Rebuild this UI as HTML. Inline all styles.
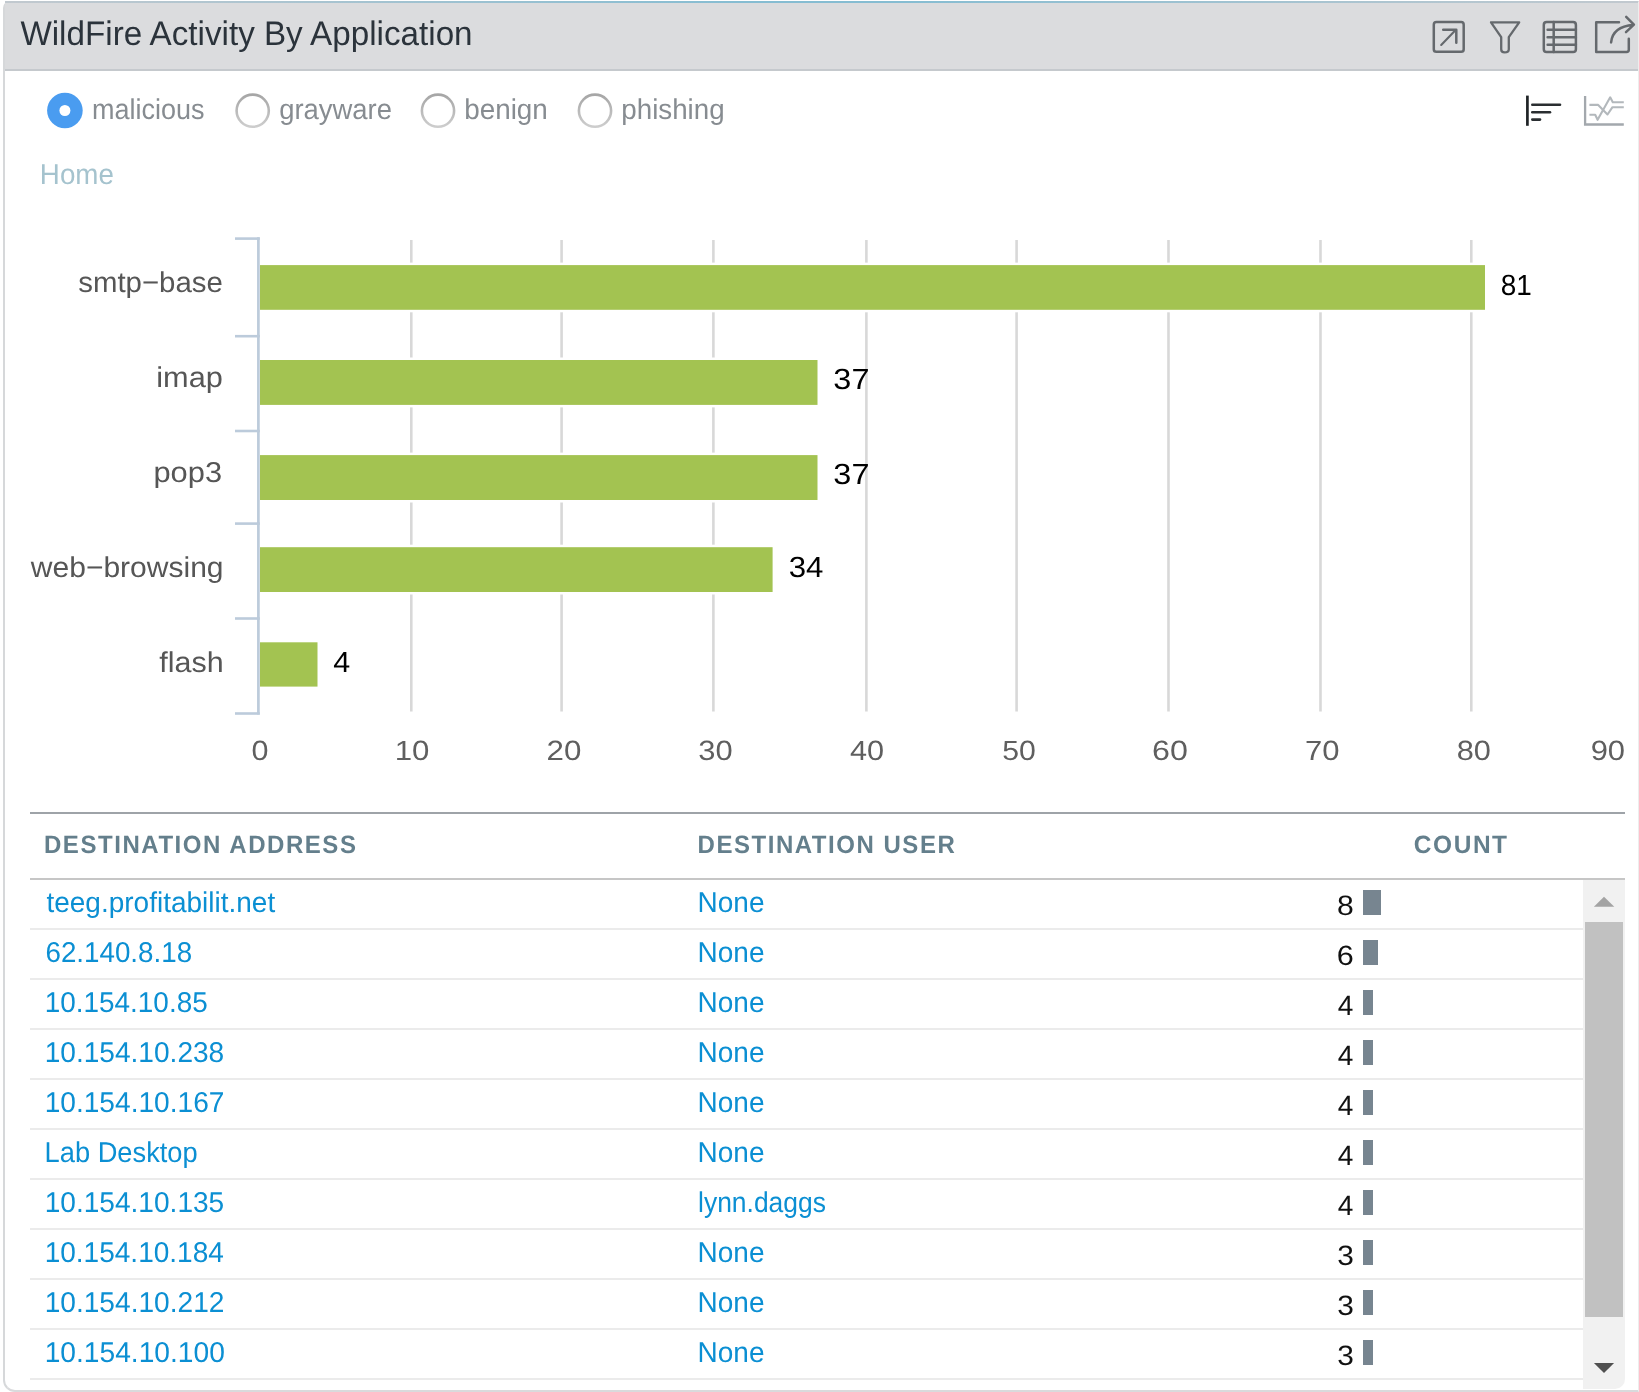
<!DOCTYPE html>
<html><head><meta charset="utf-8"><title>WildFire Activity By Application</title>
<style>
html,body{margin:0;padding:0;width:1639px;height:1392px;overflow:hidden;background:#ffffff;}
*{box-sizing:border-box;}
body{position:relative;font-family:"Liberation Sans",sans-serif;}
.abs{position:absolute;}
svg text{font-family:"Liberation Sans",sans-serif;text-rendering:geometricPrecision;}
svg.abs{will-change:transform;}
</style></head><body>

<div class="abs" style="left:3px;top:1px;width:1636px;height:1391px;border:2px solid #d6d8da;border-right:1px solid #ededed;border-bottom:2px solid #d9dadc;border-radius:7px 0 0 12px;background:#fff"></div>
<div class="abs" style="left:5px;top:1px;width:1633px;height:2px;background:linear-gradient(90deg,#c2c9cf 0%,#86bdd2 45%,#86bdd2 55%,#c2c9cf 100%)"></div>
<div class="abs" style="left:5px;top:3px;width:1633px;height:66px;background:#dbdcde"></div>
<div class="abs" style="left:5px;top:69px;width:1633px;height:2px;background:#c5c9cd"></div>
<div class="abs" style="left:30px;top:812px;width:1595px;height:2px;background:#9ea3a8"></div>
<div class="abs" style="left:30px;top:878px;width:1595px;height:2px;background:#c6c6c6"></div>
<div class="abs" style="left:1363px;top:890px;width:18px;height:25px;background:#778590"></div>
<div class="abs" style="left:30px;top:928px;width:1553px;height:2px;background:#ebebeb"></div>
<div class="abs" style="left:1363px;top:940px;width:15px;height:25px;background:#778590"></div>
<div class="abs" style="left:30px;top:978px;width:1553px;height:2px;background:#ebebeb"></div>
<div class="abs" style="left:1363px;top:990px;width:10px;height:25px;background:#778590"></div>
<div class="abs" style="left:30px;top:1028px;width:1553px;height:2px;background:#ebebeb"></div>
<div class="abs" style="left:1363px;top:1040px;width:10px;height:25px;background:#778590"></div>
<div class="abs" style="left:30px;top:1078px;width:1553px;height:2px;background:#ebebeb"></div>
<div class="abs" style="left:1363px;top:1090px;width:10px;height:25px;background:#778590"></div>
<div class="abs" style="left:30px;top:1128px;width:1553px;height:2px;background:#ebebeb"></div>
<div class="abs" style="left:1363px;top:1140px;width:10px;height:25px;background:#778590"></div>
<div class="abs" style="left:30px;top:1178px;width:1553px;height:2px;background:#ebebeb"></div>
<div class="abs" style="left:1363px;top:1190px;width:10px;height:25px;background:#778590"></div>
<div class="abs" style="left:30px;top:1228px;width:1553px;height:2px;background:#ebebeb"></div>
<div class="abs" style="left:1363px;top:1240px;width:10px;height:25px;background:#778590"></div>
<div class="abs" style="left:30px;top:1278px;width:1553px;height:2px;background:#ebebeb"></div>
<div class="abs" style="left:1363px;top:1290px;width:10px;height:25px;background:#778590"></div>
<div class="abs" style="left:30px;top:1328px;width:1553px;height:2px;background:#ebebeb"></div>
<div class="abs" style="left:1363px;top:1340px;width:10px;height:25px;background:#778590"></div>
<div class="abs" style="left:30px;top:1378px;width:1553px;height:2px;background:#ebebeb"></div>
<div class="abs" style="left:1583px;top:880px;width:42px;height:509px;background:#f1f1f1;border-radius:0 0 10px 0"></div>
<div class="abs" style="left:1585px;top:922px;width:38px;height:395px;background:#c1c1c1"></div>
<svg class="abs" style="left:0;top:0" width="1639" height="1392" viewBox="0 0 1639 1392">
<text transform="translate(20.40,44.80) scale(0.9768,1)" font-size="34.00" font-weight="normal" fill="#2b333b">WildFire Activity By Application</text>
<text transform="translate(91.91,119.00) scale(0.9441,1)" font-size="28.60" font-weight="normal" fill="#878c91">malicious</text>
<text transform="translate(279.15,119.00) scale(0.9592,1)" font-size="28.60" font-weight="normal" fill="#878c91">grayware</text>
<text transform="translate(464.15,119.00) scale(0.9745,1)" font-size="28.60" font-weight="normal" fill="#878c91">benign</text>
<text transform="translate(621.25,119.00) scale(0.9708,1)" font-size="28.60" font-weight="normal" fill="#878c91">phishing</text>
<circle cx="64.9" cy="110.5" r="17.8" fill="#4a9cf0"/>
<circle cx="64.9" cy="110.5" r="5.5" fill="#ffffff"/>
<defs><linearGradient id="rg" x1="0" y1="0" x2="0" y2="1"><stop offset="0" stop-color="#a6a6a6"/><stop offset="1" stop-color="#cdcdcd"/></linearGradient></defs>
<circle cx="252.7" cy="110.7" r="16.1" fill="#fff" stroke="url(#rg)" stroke-width="2.6"/>
<circle cx="438.0" cy="110.7" r="16.1" fill="#fff" stroke="url(#rg)" stroke-width="2.6"/>
<circle cx="595.0" cy="110.7" r="16.1" fill="#fff" stroke="url(#rg)" stroke-width="2.6"/>
<text transform="translate(39.87,183.90) scale(0.9711,1)" font-size="28.60" font-weight="normal" fill="#a5c3ce">Home</text>
<line x1="411.3" y1="240" x2="411.3" y2="711.5" stroke="#d8d8d8" stroke-width="2.6"/>
<line x1="561.6" y1="240" x2="561.6" y2="711.5" stroke="#d8d8d8" stroke-width="2.6"/>
<line x1="713.4" y1="240" x2="713.4" y2="711.5" stroke="#d8d8d8" stroke-width="2.6"/>
<line x1="866.4" y1="240" x2="866.4" y2="711.5" stroke="#d8d8d8" stroke-width="2.6"/>
<line x1="1016.6" y1="240" x2="1016.6" y2="711.5" stroke="#d8d8d8" stroke-width="2.6"/>
<line x1="1168.5" y1="240" x2="1168.5" y2="711.5" stroke="#d8d8d8" stroke-width="2.6"/>
<line x1="1320.5" y1="240" x2="1320.5" y2="711.5" stroke="#d8d8d8" stroke-width="2.6"/>
<line x1="1471.3" y1="240" x2="1471.3" y2="711.5" stroke="#d8d8d8" stroke-width="2.6"/>
<rect x="260" y="262.6" width="1227.5" height="49.69999999999999" fill="#ffffff"/>
<rect x="260" y="265.1" width="1225.0" height="44.69999999999999" fill="#a3c351"/>
<rect x="260" y="357.5" width="560.0" height="49.89999999999998" fill="#ffffff"/>
<rect x="260" y="360.0" width="557.5" height="44.89999999999998" fill="#a3c351"/>
<rect x="260" y="452.6" width="560.0" height="49.89999999999998" fill="#ffffff"/>
<rect x="260" y="455.1" width="557.5" height="44.89999999999998" fill="#a3c351"/>
<rect x="260" y="544.7" width="515.1" height="49.799999999999955" fill="#ffffff"/>
<rect x="260" y="547.2" width="512.6" height="44.799999999999955" fill="#a3c351"/>
<rect x="260" y="639.8" width="60.0" height="49.30000000000007" fill="#ffffff"/>
<rect x="260" y="642.3" width="57.5" height="44.30000000000007" fill="#a3c351"/>
<line x1="258.4" y1="237.3" x2="258.4" y2="714.5" stroke="#bccbdb" stroke-width="2.7"/>
<line x1="235" y1="238.6" x2="259.8" y2="238.6" stroke="#bccbdb" stroke-width="2.6"/>
<line x1="235" y1="336.2" x2="259.8" y2="336.2" stroke="#bccbdb" stroke-width="2.6"/>
<line x1="235" y1="431.0" x2="259.8" y2="431.0" stroke="#bccbdb" stroke-width="2.6"/>
<line x1="235" y1="523.6" x2="259.8" y2="523.6" stroke="#bccbdb" stroke-width="2.6"/>
<line x1="235" y1="618.5" x2="259.8" y2="618.5" stroke="#bccbdb" stroke-width="2.6"/>
<line x1="235" y1="713.5" x2="259.8" y2="713.5" stroke="#bccbdb" stroke-width="2.6"/>
<text transform="translate(78.28,292.20) scale(1.0244,1)" font-size="28.70" font-weight="normal" fill="#565656">smtp−base</text>
<text transform="translate(156.26,386.80) scale(1.0711,1)" font-size="28.70" font-weight="normal" fill="#565656">imap</text>
<text transform="translate(153.47,482.00) scale(1.0740,1)" font-size="28.70" font-weight="normal" fill="#565656">pop3</text>
<text transform="translate(30.80,577.30) scale(1.0466,1)" font-size="28.70" font-weight="normal" fill="#565656">web−browsing</text>
<text transform="translate(159.28,671.90) scale(1.0616,1)" font-size="28.70" font-weight="normal" fill="#565656">flash</text>
<text transform="translate(1500.65,295.00) scale(0.9596,1)" font-size="29.10" font-weight="normal" fill="#000000">81</text>
<text transform="translate(833.37,389.40) scale(1.1141,1)" font-size="29.10" font-weight="normal" fill="#000000">37</text>
<text transform="translate(833.37,484.40) scale(1.1141,1)" font-size="29.10" font-weight="normal" fill="#000000">37</text>
<text transform="translate(788.72,576.90) scale(1.0724,1)" font-size="29.10" font-weight="normal" fill="#000000">34</text>
<text transform="translate(333.17,671.80) scale(1.0479,1)" font-size="29.10" font-weight="normal" fill="#000000">4</text>
<text transform="translate(251.59,760.00) scale(1.0977,1)" font-size="27.80" font-weight="normal" fill="#5f5f5f">0</text>
<text transform="translate(394.64,760.00) scale(1.1223,1)" font-size="27.80" font-weight="normal" fill="#5f5f5f">10</text>
<text transform="translate(546.62,760.00) scale(1.1263,1)" font-size="27.80" font-weight="normal" fill="#5f5f5f">20</text>
<text transform="translate(698.28,760.00) scale(1.1111,1)" font-size="27.80" font-weight="normal" fill="#5f5f5f">30</text>
<text transform="translate(850.04,760.00) scale(1.1024,1)" font-size="27.80" font-weight="normal" fill="#5f5f5f">40</text>
<text transform="translate(1002.20,760.00) scale(1.0868,1)" font-size="27.80" font-weight="normal" fill="#5f5f5f">50</text>
<text transform="translate(1151.98,760.00) scale(1.1579,1)" font-size="27.80" font-weight="normal" fill="#5f5f5f">60</text>
<text transform="translate(1304.94,760.00) scale(1.1158,1)" font-size="27.80" font-weight="normal" fill="#5f5f5f">70</text>
<text transform="translate(1456.67,760.00) scale(1.1045,1)" font-size="27.80" font-weight="normal" fill="#5f5f5f">80</text>
<text transform="translate(1590.65,760.00) scale(1.1119,1)" font-size="27.80" font-weight="normal" fill="#5f5f5f">90</text>
<text transform="translate(43.97,852.80) scale(0.9609,1)" font-size="25.00" font-weight="bold" letter-spacing="1.6" fill="#647f8c">DESTINATION ADDRESS</text>
<text transform="translate(697.57,852.80) scale(0.9597,1)" font-size="25.00" font-weight="bold" letter-spacing="1.6" fill="#647f8c">DESTINATION USER</text>
<text transform="translate(1413.82,852.80) scale(0.9787,1)" font-size="25.00" font-weight="bold" letter-spacing="1.6" fill="#647f8c">COUNT</text>
<text transform="translate(46.41,912.00) scale(0.9790,1)" font-size="28.60" font-weight="normal" fill="#0b8fd3">teeg.profitabilit.net</text>
<text transform="translate(697.55,912.00) scale(0.9799,1)" font-size="28.60" font-weight="normal" fill="#0b8fd3">None</text>
<text transform="translate(1337.01,914.80) scale(1.0758,1)" font-size="28.00" font-weight="normal" fill="#111111">8</text>
<text transform="translate(45.44,962.00) scale(0.9710,1)" font-size="28.60" font-weight="normal" fill="#0b8fd3">62.140.8.18</text>
<text transform="translate(697.55,962.00) scale(0.9799,1)" font-size="28.60" font-weight="normal" fill="#0b8fd3">None</text>
<text transform="translate(1336.77,964.80) scale(1.0923,1)" font-size="28.00" font-weight="normal" fill="#111111">6</text>
<text transform="translate(44.65,1012.00) scale(0.9768,1)" font-size="28.60" font-weight="normal" fill="#0b8fd3">10.154.10.85</text>
<text transform="translate(697.55,1012.00) scale(0.9799,1)" font-size="28.60" font-weight="normal" fill="#0b8fd3">None</text>
<text transform="translate(1337.70,1014.80) scale(1.0000,1)" font-size="28.00" font-weight="normal" fill="#111111">4</text>
<text transform="translate(44.64,1062.00) scale(0.9822,1)" font-size="28.60" font-weight="normal" fill="#0b8fd3">10.154.10.238</text>
<text transform="translate(697.55,1062.00) scale(0.9799,1)" font-size="28.60" font-weight="normal" fill="#0b8fd3">None</text>
<text transform="translate(1337.70,1064.80) scale(1.0000,1)" font-size="28.00" font-weight="normal" fill="#111111">4</text>
<text transform="translate(44.64,1112.00) scale(0.9833,1)" font-size="28.60" font-weight="normal" fill="#0b8fd3">10.154.10.167</text>
<text transform="translate(697.55,1112.00) scale(0.9799,1)" font-size="28.60" font-weight="normal" fill="#0b8fd3">None</text>
<text transform="translate(1337.70,1114.80) scale(1.0000,1)" font-size="28.00" font-weight="normal" fill="#111111">4</text>
<text transform="translate(44.61,1162.00) scale(0.9535,1)" font-size="28.60" font-weight="normal" fill="#0b8fd3">Lab Desktop</text>
<text transform="translate(697.55,1162.00) scale(0.9799,1)" font-size="28.60" font-weight="normal" fill="#0b8fd3">None</text>
<text transform="translate(1337.70,1164.80) scale(1.0000,1)" font-size="28.00" font-weight="normal" fill="#111111">4</text>
<text transform="translate(44.64,1212.00) scale(0.9822,1)" font-size="28.60" font-weight="normal" fill="#0b8fd3">10.154.10.135</text>
<text transform="translate(698.04,1212.00) scale(0.9247,1)" font-size="28.60" font-weight="normal" fill="#0b8fd3">lynn.daggs</text>
<text transform="translate(1337.70,1214.80) scale(1.0000,1)" font-size="28.00" font-weight="normal" fill="#111111">4</text>
<text transform="translate(44.64,1262.00) scale(0.9800,1)" font-size="28.60" font-weight="normal" fill="#0b8fd3">10.154.10.184</text>
<text transform="translate(697.55,1262.00) scale(0.9799,1)" font-size="28.60" font-weight="normal" fill="#0b8fd3">None</text>
<text transform="translate(1337.13,1264.80) scale(1.0677,1)" font-size="28.00" font-weight="normal" fill="#111111">3</text>
<text transform="translate(44.64,1312.00) scale(0.9833,1)" font-size="28.60" font-weight="normal" fill="#0b8fd3">10.154.10.212</text>
<text transform="translate(697.55,1312.00) scale(0.9799,1)" font-size="28.60" font-weight="normal" fill="#0b8fd3">None</text>
<text transform="translate(1337.13,1314.80) scale(1.0677,1)" font-size="28.00" font-weight="normal" fill="#111111">3</text>
<text transform="translate(44.63,1362.00) scale(0.9855,1)" font-size="28.60" font-weight="normal" fill="#0b8fd3">10.154.10.100</text>
<text transform="translate(697.55,1362.00) scale(0.9799,1)" font-size="28.60" font-weight="normal" fill="#0b8fd3">None</text>
<text transform="translate(1337.13,1364.80) scale(1.0677,1)" font-size="28.00" font-weight="normal" fill="#111111">3</text>
<polygon points="1593.9,906.8 1614.3,906.8 1604,896.8" fill="#a3a3a3"/>
<polygon points="1593.9,1363 1614.1,1363 1604,1373" fill="#505050"/>
<g fill="none" stroke="#65696d" stroke-width="2.5" stroke-linecap="round" stroke-linejoin="round"><rect x="1433.8" y="22.1" width="29.9" height="29.7" rx="2.6"/><path d="M1441.2,44.9 L1454.2,31.6" stroke-width="2.1"/><path d="M1443.2,29.8 L1456.3,29.8 L1456.3,42.8"/><path d="M1491,22.3 L1519.2,22.3 L1508.8,37.2 L1508.8,49.2 Q1508.8,52.4 1504.6,52.4 Q1501.2,52.4 1501.2,49.2 L1501.2,37.2 Z" stroke-width="2.3"/><rect x="1543.8" y="22.1" width="32.1" height="29.9" rx="2.8"/><path d="M1553.7,22.1 L1553.7,52 M1547.6,29.7 L1575.9,29.7 M1547.6,37.2 L1575.9,37.2 M1547.6,44.8 L1575.9,44.8"/><path d="M1619,22.3 L1596.2,22.3 L1596.2,52 L1626.6,52 Q1628.8,52 1628.8,49.8 L1628.8,38.8"/><path d="M1611.1,42.4 Q1612.5,26.6 1633.6,24.7 M1626.2,16.8 L1633.9,24.7 L1626,32.2"/></g>
<g stroke-linecap="butt"><line x1="1527.4" y1="95.6" x2="1527.4" y2="125.8" stroke="#1f2326" stroke-width="2.7"/><g stroke="#2a2e31" stroke-width="2.6" stroke-linecap="round"><line x1="1532.3" y1="104.7" x2="1560" y2="104.7"/><line x1="1532.3" y1="112.2" x2="1550" y2="112.2"/><line x1="1532.3" y1="119.6" x2="1540" y2="119.6"/></g><path d="M1585.1,96.1 L1585.1,124.5 L1623.8,124.5" fill="none" stroke="#a3a8ad" stroke-width="2.3"/><path d="M1589.4,104.9 L1598.2,104.9 L1607.5,114.5 L1612.5,107.2 L1623.8,107.2" fill="none" stroke="#b3b8bc" stroke-width="2.1" stroke-linejoin="round"/><path d="M1589.4,114.8 L1595.2,114.8 L1597.6,119.8 L1610.2,97.3 L1612.8,102.2 L1623.8,102.2" fill="none" stroke="#b3b8bc" stroke-width="2.1" stroke-linejoin="round"/></g>
</svg>
</body></html>
